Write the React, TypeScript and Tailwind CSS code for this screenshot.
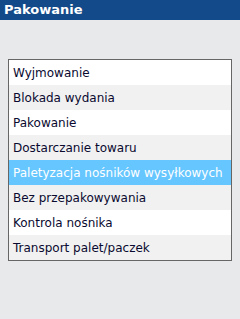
const items = [
  'Wyjmowanie',
  'Blokada wydania',
  'Pakowanie',
  'Dostarczanie towaru',
  'Paletyzacja nośników wysyłkowych',
  'Bez przepakowywania',
  'Kontrola nośnika',
  'Transport palet/paczek',
];

const selected = 4;

export default function App() {
  return (
    <div className="flex h-[319px] w-[240px] flex-col bg-[#e8e9eb] font-['DejaVu_Sans',sans-serif]">
      <div className="flex h-[20px] items-center bg-[#134a89] px-1 text-[13px] font-bold text-white">
        Pakowanie
      </div>
      <div className="px-2 pt-[39px]">
        <ul className="w-[224px] border border-[#666666] bg-white">
          {items.map((item, i) => (
            <li
              key={item}
              className={
                'flex h-[25px] items-center whitespace-nowrap px-[4px] text-[12px] ' +
                (i === selected
                  ? 'bg-[#66c6ff] text-white'
                  : i % 2 === 1
                    ? 'bg-[#f1f1f1] text-[#0a0a30]'
                    : 'bg-white text-[#0a0a30]')
              }
            >
              {item}
            </li>
          ))}
        </ul>
      </div>
    </div>
  );
}
